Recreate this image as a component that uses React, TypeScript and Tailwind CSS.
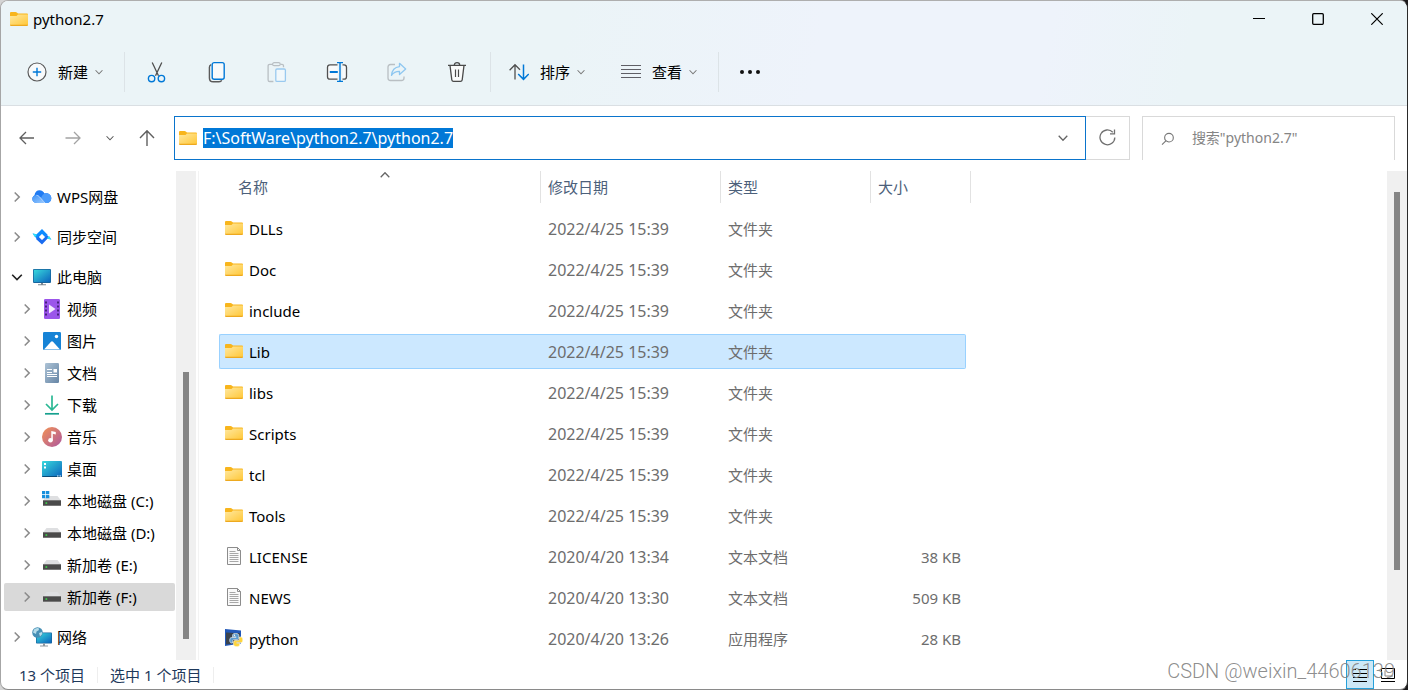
import { useState } from "react";
import type { ReactNode } from "react";

const files = [
  { name: "DLLs", date: "2022/4/25 15:39", type: "文件夹", size: "", icon: "folder" },
  { name: "Doc", date: "2022/4/25 15:39", type: "文件夹", size: "", icon: "folder" },
  { name: "include", date: "2022/4/25 15:39", type: "文件夹", size: "", icon: "folder" },
  { name: "Lib", date: "2022/4/25 15:39", type: "文件夹", size: "", icon: "folder" },
  { name: "libs", date: "2022/4/25 15:39", type: "文件夹", size: "", icon: "folder" },
  { name: "Scripts", date: "2022/4/25 15:39", type: "文件夹", size: "", icon: "folder" },
  { name: "tcl", date: "2022/4/25 15:39", type: "文件夹", size: "", icon: "folder" },
  { name: "Tools", date: "2022/4/25 15:39", type: "文件夹", size: "", icon: "folder" },
  { name: "LICENSE", date: "2020/4/20 13:34", type: "文本文档", size: "38 KB", icon: "text" },
  { name: "NEWS", date: "2020/4/20 13:30", type: "文本文档", size: "509 KB", icon: "text" },
  { name: "python", date: "2020/4/20 13:26", type: "应用程序", size: "28 KB", icon: "python" },
];

export default function App() {
  return (
    <div className="h-screen bg-linear-to-r from-[#d4d4d4] from-50% to-[#1c1a1c] to-90% font-['Noto_Sans','Noto_Sans_CJK_SC',sans-serif] text-[15px] leading-5 text-black">
      <div className="relative flex h-full flex-col overflow-hidden rounded-lg border border-t-[#aeaeae] border-r-[#2a2a2a] border-b-[#8a8a8a] border-l-[#a6a6a6] bg-white">
        <header className="shrink-0 border-b border-[#dadfe3] bg-linear-[100deg,#ebf4f7_40%,#eef3fb_58%,#eef3fb_74%,#ebf4f7_84%]">
          <TitleBar />
          <Toolbar />
        </header>
        <NavBar />
        <div className="flex min-h-0 flex-1">
          <Sidebar />
          <FileList />
        </div>
        <StatusBar />
        <div className="pointer-events-none absolute right-3 bottom-1 font-['Roboto',sans-serif] text-[20px] leading-7 font-light text-[#808080]/90">
          CSDN @weixin_44606139
        </div>
      </div>
    </div>
  );
}

const TitleBar = () => (
  <div className="flex h-9 items-center pr-px">
    <h1 className="flex flex-1 items-center gap-[5px] pl-[9px]">
      <FolderIcon />
      python2.7
    </h1>
    <button aria-label="最小化" className="flex h-full w-[59px] items-center justify-center">
      <svg width="12" height="12" viewBox="0 0 12 12" stroke="#000" fill="none"><path d="M0 5.5h12" /></svg>
    </button>
    <button aria-label="最大化" className="flex h-full w-[59px] items-center justify-center">
      <svg width="12" height="12" viewBox="0 0 12 12" stroke="#000" strokeWidth="1.3" fill="none"><rect x=".7" y=".7" width="10.6" height="10.6" rx="1" /></svg>
    </button>
    <button aria-label="关闭" className="flex h-full w-[59px] items-center justify-center">
      <svg width="12" height="12" viewBox="0 0 12 12" stroke="#000" strokeWidth="1.2" fill="none"><path d="M.3.3l11.4 11.4M11.7.3L.3 11.7" /></svg>
    </button>
  </div>
);

const Toolbar = () => (
  <div className="flex h-17 items-center pt-0.5">
    <ToolMenu label="新建" className="w-[123px] pl-[26px]">
      <svg width="20" height="20" viewBox="0 0 20 20" fill="none">
        <circle cx="10" cy="10" r="9" stroke="#5a5a5a" strokeWidth="1.2" fill="#f8fafb" />
        <path d="M10 5.8v8.4M5.8 10h8.4" stroke="#0078d7" strokeWidth="1.4" />
      </svg>
    </ToolMenu>
    <Divider />
    <div className="flex pr-[3px] pl-0.5">
      <ToolButton label="剪切">
        <path d="M6.2 1.5l6.3 13.2M15.8 1.5L9.5 14.7" stroke="#505050" strokeWidth="1.3" />
        <circle cx="5.6" cy="17.6" r="3.2" stroke="#0078d7" strokeWidth="1.4" />
        <circle cx="15.4" cy="17.6" r="3.2" stroke="#0078d7" strokeWidth="1.4" />
      </ToolButton>
      <ToolButton label="复制">
        <path d="M5.2 3.6C3.9 4 3.4 4.9 3.4 6.2V17c0 2.4 1.5 3.8 3.8 3.8H13c1.4 0 2.300-.5 2.700-1.600" stroke="#5a5a5a" strokeWidth="1.4" />
        <rect x="6.2" y="1.6" width="12" height="16.6" rx="2" stroke="#0078d7" strokeWidth="1.4" fill="#f8fafb" />
      </ToolButton>
      <ToolButton label="粘贴">
        <path d="M7 3.300H3.700c-1 0-1.600.6-1.600 1.600v14c0 1 .6 1.600 1.600 1.600h3.700M14.300 3.300H16c1 0 1.500.6 1.500 1.500v1.500" stroke="#b9bfc3" strokeWidth="1.3" />
        <rect x="6.6" y="1.7" width="7.6" height="3" rx="1.5" stroke="#b9bfc3" strokeWidth="1.2" />
        <rect x="9.8" y="8" width="9.6" height="12.4" rx="1.2" stroke="#99c9ef" strokeWidth="1.3" fill="#f2f8fb" />
      </ToolButton>
      <ToolButton label="重命名">
        <path d="M11.500 3.800H4c-1.600 0-2.500.9-2.500 2.500v9.400c0 1.600.9 2.500 2.500 2.500h7.500M16.500 3.800H18c1.600 0 2.500.9 2.500 2.500v9.400c0 1.600-.9 2.500-2.500 2.500h-1.500" stroke="#505050" strokeWidth="1.3" fill="#f8fafb" />
        <path d="M3.800 11h8" stroke="#0078d7" strokeWidth="2" />
        <path d="M11 1.600h6M11 20.400h6M14 1.600v18.800" stroke="#0078d7" strokeWidth="1.4" />
      </ToolButton>
      <ToolButton label="共享">
        <path d="M9 3.500H4.500C3 3.500 2 4.500 2 6v11c0 1.500 1 2.500 2.500 2.500h11c1.500 0 2.500-1 2.500-2.500v-1.500" stroke="#b9bfc3" strokeWidth="1.3" />
        <path d="M13.500 2.300l6.200 5.600-6.200 5.600v-3.100c-3.600-.1-6 1.100-8 4 .4-5 3.200-8.200 8-8.800z" stroke="#8fc7f0" strokeWidth="1.3" strokeLinejoin="round" />
      </ToolButton>
      <ToolButton label="删除">
        <path d="M4 4.300l1.800 14.500c.2 1 .7 1.600 1.700 1.600h7c1 0 1.500-.6 1.700-1.600L18 4.300" stroke="#4a4a4a" strokeWidth="1.3" fill="#fafbfb" />
        <path d="M2 4.300h18M8.300 4c0-3.200 5.400-3.200 5.400 0" stroke="#4a4a4a" strokeWidth="1.3" />
        <path d="M9.500 8.500v7.500M12.500 8.500v7.500" stroke="#4a4a4a" strokeWidth="1.2" />
      </ToolButton>
    </div>
    <Divider />
    <ToolMenu label="排序" className="w-[112px] pl-[18px]">
      <svg width="20" height="20" viewBox="0 0 20 20" fill="none">
        <path d="M6 17.500V3M.6 8.200L6 2.700l5 5" stroke="#505050" strokeWidth="1.3" />
        <path d="M14.500 2.500v14.800M9.200 12l5.300 5.400L19.800 12" stroke="#0078d7" strokeWidth="1.5" />
      </svg>
    </ToolMenu>
    <ToolMenu label="查看" className="w-[115px] pl-[18px]">
      <svg width="20" height="20" viewBox="0 0 20 20" stroke="#5f5f66" strokeWidth="1.2">
        <path d="M0 3.500h20M0 7.500h20M0 11.500h20M0 15.500h20" />
      </svg>
    </ToolMenu>
    <Divider />
    <button aria-label="更多" className="flex h-10 w-[62px] items-center justify-center">
      <svg width="20" height="4" viewBox="0 0 20 4" fill="#111"><circle cx="2" cy="2" r="2" /><circle cx="10" cy="2" r="2" /><circle cx="18" cy="2" r="2" /></svg>
    </button>
  </div>
);

const Divider = () => <div className="h-10 w-px bg-[#dce3e7]" />;

const ToolMenu = ({ label, className, children }: { label: string; className: string; children: ReactNode }) => (
  <button className={`flex h-10 shrink-0 items-center ${className}`}>
    {children}
    <span className="mr-[7px] ml-[11px]">{label}</span>
    <Chevron className="size-2 text-[#777]" />
  </button>
);

const ToolButton = ({ label, children }: { label: string; children: ReactNode }) => (
  <button aria-label={label} className="flex h-10 w-15 shrink-0 items-center justify-center">
    <svg width="22" height="22" viewBox="0 0 22 22" fill="none">{children}</svg>
  </button>
);

const Chevron = ({ className = "" }: { className?: string }) => (
  <svg viewBox="0 0 10 10" fill="none" stroke="currentColor" strokeWidth="1.3" className={className}>
    <path d="M.7 2.800L5 7.200l4.300-4.400" />
  </svg>
);

const NavBar = () => (
  <div className="flex shrink-0 items-center pt-2.5 pr-3 pb-[11px] pl-[3px]">
    <button aria-label="后退" className="flex h-11 w-[46px] shrink-0 items-center justify-center">
      <svg width="16" height="14" viewBox="0 0 16 14" fill="none" stroke="#5f5f5f" strokeWidth="1.3"><path d="M15 7H1.500M7 1L1 7l6 6" /></svg>
    </button>
    <button aria-label="前进" className="flex h-11 w-[46px] shrink-0 items-center justify-center">
      <svg width="16" height="14" viewBox="0 0 16 14" fill="none" stroke="#a3a3a3" strokeWidth="1.3"><path d="M.5 7h14M9 1l6 6-6 6" /></svg>
    </button>
    <button aria-label="最近位置" className="flex h-11 w-7 shrink-0 items-center justify-center">
      <Chevron className="size-2 text-[#555]" />
    </button>
    <button aria-label="上移" className="mr-1 flex h-11 w-[46px] shrink-0 items-center justify-center">
      <svg width="16" height="18" viewBox="0 0 16 18" fill="none" stroke="#5f5f5f" strokeWidth="1.4"><path d="M8 17V2M1 9l7-7.300L15 9" /></svg>
    </button>
    <div className="flex h-11 min-w-0 flex-1 items-center border border-[#0a74cc] pl-1">
      <FolderIcon />
      <input
        aria-label="地址"
        defaultValue="F:\SoftWare\python2.7\python2.7"
        className="ml-1.5 field-sizing-content h-5 bg-[#0078d7] text-base leading-5 text-white outline-none"
      />
      <button aria-label="以前的位置" className="ml-auto flex h-full w-11 items-center justify-center">
        <Chevron className="size-2.5 text-[#666]" />
      </button>
    </div>
    <button aria-label="刷新" className="mr-3 flex h-11 w-11 shrink-0 items-center justify-center border border-l-0 border-[#d9d9d9]">
      <svg width="18" height="18" viewBox="0 0 18 18" fill="none" stroke="#707070" strokeWidth="1.3">
        <path d="M15.800 8.400A7.400 7.400 0 1 1 13.800 3.300M15.500.4v4.400H11" />
      </svg>
    </button>
    <label className="flex h-11 w-[253px] shrink-0 items-center border border-b-0 border-[#d9d9d9] pb-0.5 pl-[18px]">
      <svg width="16" height="16" viewBox="0 0 16 16" fill="none" stroke="#777" strokeWidth="1.3">
        <circle cx="9.2" cy="7.6" r="5" />
        <path d="M5.600 11.200L1.200 15.600" />
      </svg>
      <input aria-label="搜索" placeholder='搜索"python2.7"' className="ml-[17px] w-full min-w-0 text-sm outline-none placeholder:text-[#858585]" />
    </label>
  </div>
);

const places = [
  { label: "视频", icon: <VideoIcon /> },
  { label: "图片", icon: <PictureIcon /> },
  { label: "文档", icon: <DocIcon /> },
  { label: "下载", icon: <DownloadIcon /> },
  { label: "音乐", icon: <MusicIcon /> },
  { label: "桌面", icon: <DesktopIcon /> },
  { label: "本地磁盘 (C:)", icon: <DriveIcon system /> },
  { label: "本地磁盘 (D:)", icon: <DriveIcon /> },
  { label: "新加卷 (E:)", icon: <DriveIcon /> },
  { label: "新加卷 (F:)", icon: <DriveIcon /> },
];

const Sidebar = () => (
  <div className="flex w-[195px] shrink-0">
    <nav className="flex min-w-0 flex-1 flex-col gap-3 overflow-hidden pt-3 pr-px pl-[3px]">
      <TreeItem label="WPS网盘" icon={<CloudIcon />} />
      <TreeItem label="同步空间" icon={<SyncIcon />} />
      <div className="flex flex-col gap-1">
        <TreeItem label="此电脑" icon={<MonitorIcon />} open />
        {places.map((p) => (
          <TreeItem key={p.label} label={p.label} icon={p.icon} nested active={p.label === "新加卷 (F:)"} />
        ))}
      </div>
      <TreeItem label="网络" icon={<NetworkIcon />} />
    </nav>
    <div className="flex w-5 flex-col items-center bg-[#f0f0f0]">
      <div className="mt-[201px] h-[267px] w-1.5 bg-[#858585]" />
    </div>
  </div>
);

type TreeItemProps = { label: string; icon: ReactNode; nested?: boolean; open?: boolean; active?: boolean };

const TreeItem = ({ label, icon, nested, open, active }: TreeItemProps) => (
  <button
    className={`flex h-7 w-full shrink-0 items-center rounded-xs whitespace-nowrap ${nested ? "pl-[17px]" : "pl-[7px]"} ${active ? "bg-[#d9d9d9]" : ""}`}
  >
    <svg width="12" height="12" viewBox="0 0 12 12" fill="none" strokeWidth="1.6" className={open ? "stroke-[#222]" : "stroke-[#8b8b8b]"}>
      <path d={open ? "M1.200 3.800L6 8.600l4.800-4.800" : "M3.700 1.500L8.200 6l-4.500 4.500"} />
    </svg>
    <span className="mr-[5px] ml-[9px] size-5 shrink-0">{icon}</span>
    {label}
  </button>
);

const FileList = () => {
  const [selected, setSelected] = useState("Lib");

  return (
    <main className="flex min-w-0 flex-1">
      <div className="ml-0.5 min-w-0 flex-1 overflow-hidden border-l border-[#f3f3f3] pl-5">
        <table className="w-[747px] table-fixed border-separate border-spacing-0">
          <thead>
            <tr className="text-left text-[#4c607a]">
              <th className="relative h-[37px] w-[322px] p-0 align-top font-normal">
                <div className="h-8 border-r border-[#e2e2e2] pt-1.5 pl-[19px]">名称</div>
                <Chevron className="absolute -top-px left-[161px] size-2.5 rotate-180 text-[#666]" />
              </th>
              <th className="w-[180px] p-0 align-top font-normal">
                <div className="h-8 border-r border-[#e2e2e2] pt-1.5 pl-[7px]">修改日期</div>
              </th>
              <th className="w-[150px] p-0 align-top font-normal">
                <div className="h-8 border-r border-[#e2e2e2] pt-1.5 pl-[7px]">类型</div>
              </th>
              <th className="p-0 align-top font-normal">
                <div className="-mr-[5px] h-8 border-r border-[#e2e2e2] pt-1.5 pl-[7px]">大小</div>
              </th>
            </tr>
          </thead>
          <tbody>
            {files.map((f) => {
              const cell = `flex h-[35px] items-center border-y ${f.name === selected ? "border-[#99d1ff] bg-[#cce8ff]" : "border-transparent"}`;
              return (
                <tr key={f.name} onClick={() => setSelected(f.name)} className="text-[#6d6d6d]">
                  <td className="p-0 py-[3px]">
                    <div className={`${cell} rounded-l-xs border-l pl-[5px] text-black`}>
                      <span className="mr-1.5 flex w-[18px] justify-center pb-0.5">
                        {f.icon === "folder" && <FolderIcon />}
                        {f.icon === "text" && <TextFileIcon />}
                        {f.icon === "python" && <PythonIcon />}
                      </span>
                      {f.name}
                    </div>
                  </td>
                  <td className="p-0"><div className={`${cell} pl-[7px] text-base leading-5`}>{f.date}</div></td>
                  <td className="p-0"><div className={`${cell} pl-[7px]`}>{f.type}</div></td>
                  <td className="p-0"><div className={`${cell} justify-end rounded-r-xs border-r pr-1`}>{f.size}</div></td>
                </tr>
              );
            })}
          </tbody>
        </table>
      </div>
      <div className="flex w-5 shrink-0 flex-col items-center bg-[#f0f0f0]">
        <div className="mt-[21px] h-[378px] w-1.5 bg-[#858585]" />
      </div>
    </main>
  );
};

const StatusBar = () => (
  <footer className="flex h-[29px] shrink-0 items-center pr-[5px] pl-[18px] text-[#1e395b]">
    <span>13 个项目</span>
    <div className="mx-3 h-4 w-px bg-[#eee]" />
    <span>选中 1 个项目</span>
    <div className="mx-3 h-4 w-px bg-[#eee]" />
    <button aria-label="详细信息" className="ml-auto flex h-[29px] w-7 items-center justify-center border border-[#26a0da] bg-[#cde8f6]">
      <svg width="16" height="16" viewBox="0 0 16 16" stroke="#000"><path d="M1 2.500h3M6 2.500h9M1 6.500h14M1 10.500h14M1 14.500h14" /></svg>
    </button>
    <button aria-label="大图标" className="flex h-[29px] w-7 items-center justify-center">
      <svg width="14" height="16" viewBox="0 0 14 16" fill="none" stroke="#000"><path d="M.5 1.500h13v10H.5zM0 14.500h14" /><path d="M4 3.500v5.500h8" stroke="#888" /></svg>
    </button>
  </footer>
);

function FolderIcon() {
  return (
    <svg width="18" height="14" viewBox="0 0 18 14" className="shrink-0">
      <defs>
        <linearGradient id="folder" x1="0" y1="0" x2="1" y2="1">
          <stop offset="0" stopColor="#ffe8a0" />
          <stop offset="1" stopColor="#ffc83a" />
        </linearGradient>
      </defs>
      <path d="M0 1q0-1 1-1h4.500q.8 0 1.300.6L8 1.500h9q1 0 1 1V6H0z" fill="#f8b51c" />
      <path d="M0 4h6.500l1.500-1.500h10V13H0z" fill="url(#folder)" />
      <path d="M0 12.800h18V13q0 1-1 1H1q-1 0-1-1z" fill="#eda91f" />
    </svg>
  );
}

function TextFileIcon() {
  return (
    <svg width="16" height="18" viewBox="0 0 16 18" fill="none">
      <path d="M1.500.5h10l3 3v14h-13z" fill="#fafafa" stroke="#8c8c8c" />
      <path d="M11.500.5v3h3" stroke="#8c8c8c" />
      <path d="M3.500 4.500h6M3.500 6.500h9M3.500 8.500h9M3.500 10.500h9M3.500 12.500h9M3.500 14.500h9" stroke="#a8a8a8" />
    </svg>
  );
}

function PythonIcon() {
  return (
    <svg width="18" height="18" viewBox="0 0 18 18">
      <path d="M0 0l16 1.500v13L0 17z" fill="#2158b8" />
      <path d="M1 3.500l14 .7v9.500L1 15.500z" fill="#3b434d" />
      <path d="M10.500 4.500C8 4.500 7.500 5.500 7.500 6.500v1.300h3.500v.7H6.700c-1.500 0-2 1.200-2 2.800s.6 2.700 1.800 2.700h1v-1.700c0-1 .7-1.700 1.700-1.700h3.300c.8 0 1.300-.5 1.300-1.300V6.500c0-1.300-1-2-3.300-2z" fill="#5b9bd0" stroke="#e8f0f6" strokeWidth=".7" />
      <path d="M14.500 8v1.800c0 1-.8 1.800-1.700 1.800H10c-.8 0-1.400.6-1.400 1.400V15.500c0 1.300 1.200 2 3 2s3.100-.6 3.100-2v-1.300h-3v-.6h4.200c1.300 0 1.900-1 1.900-2.600s-.6-3-1.800-3z" fill="#ffd43b" stroke="#fff6cf" strokeWidth=".7" />
      <circle cx="9.4" cy="6.3" r=".7" fill="#fff" />
    </svg>
  );
}

function CloudIcon() {
  return (
    <svg width="20" height="20" viewBox="0 0 20 20">
      <defs>
        <linearGradient id="cloud" x1="0" y1="0" x2="1" y2="1">
          <stop offset="0" stopColor="#3f93f7" />
          <stop offset="1" stopColor="#9ccbff" />
        </linearGradient>
      </defs>
      <path d="M5 16C1.800 16 .3 14 .3 12S1.800 8.500 2.500 8.300C2.800 5 5 3.200 7.500 3.200c2.300 0 4.300 1.300 5 3.200 3.300-.9 6.800 1.200 6.800 4.800 0 3-2 4.800-5 4.800z" fill="#1f7bf3" />
      <path d="M5 16C1.800 16 .3 14 .3 12s1.600-3.800 3.900-3.700C7.500 8.300 9 12 13 16z" fill="url(#cloud)" />
      <path d="M9 11c1-3 2.500-4.200 4-4.600 3.500-.5 6.300 1.700 6.300 4.800 0 3-2 4.800-5 4.800H13c-1.600-1.600-2.900-3.200-4-5z" fill="#4b9bfb" />
      <path d="M4.500 8.300C7.500 8.500 9 12 13 16" stroke="#d5e8ff" strokeWidth=".8" fill="none" />
    </svg>
  );
}

function SyncIcon() {
  return (
    <svg width="20" height="20" viewBox="0 0 20 20" fill="none">
      <path d="M.6 6.500l4 .7L10 2l5.600 5.700-2.700 2.700L10 7.300l-5 5z" fill="#0d8bff" />
      <path d="M19.400 12.500l-4-.7L10 17.500l-6-5.500 2.700-2.500L10 12.500l5-4.500z" fill="#1a6cf0" />
      <path d="M.6 6.500l4.500.9L3 10.300z" fill="#2fe0f8" />
      <path d="M19.400 12.500l-4.500-.9L17 8.700z" fill="#2fe0f8" />
      <path d="M10 7l3 3-3 3-3-3z" fill="#fff" />
    </svg>
  );
}

function MonitorIcon() {
  return (
    <svg width="20" height="20" viewBox="0 0 20 20">
      <defs>
        <linearGradient id="screen" x1="0" y1="0" x2="1" y2="1">
          <stop offset="0" stopColor="#38d9dc" />
          <stop offset="1" stopColor="#0c64bd" />
        </linearGradient>
      </defs>
      <rect x="1" y="2" width="18" height="14" rx="1" fill="#17659e" />
      <rect x="1.8" y="2.8" width="16.4" height="12.2" fill="url(#screen)" />
      <path d="M9 16h2v1.300h3v1H6v-1h3z" fill="#7d8790" />
    </svg>
  );
}

function NetworkIcon() {
  return (
    <svg width="20" height="20" viewBox="0 0 20 20">
      <rect x="4" y="5.5" width="16" height="11" rx=".8" fill="#17659e" />
      <rect x="4.7" y="6.2" width="14.6" height="9.6" fill="url(#screen)" />
      <path d="M11 16.500h2v2h3v1H8v-1h3z" fill="#8f989f" />
      <circle cx="5.5" cy="5.5" r="5.3" fill="#468fb5" />
      <path d="M2 2.500q2-2 4.500-1.500L7 3 4.500 4.500 4 7 1 5.500zM7 6l3-1 .3 2L8 9.500z" fill="#b5dcea" />
    </svg>
  );
}

function VideoIcon() {
  return (
    <svg width="20" height="20" viewBox="0 0 20 20">
      <rect x="2" width="16" height="20" rx="1.2" fill="#9b55ea" />
      <path d="M3 2.500h2v2H3zM3 6.500h2v2H3zM3 10.500h2v2H3zM3 14.500h2v2H3zM15 2.500h2v2h-2zM15 6.500h2v2h-2zM15 10.500h2v2h-2zM15 14.500h2v2h-2z" fill="#46227c" />
      <path d="M7 5.500l6.500 4.500L7 14.500z" fill="#f3eafd" />
    </svg>
  );
}

function PictureIcon() {
  return (
    <svg width="20" height="20" viewBox="0 0 20 20">
      <rect x="1" y="1" width="18" height="18" rx="1.3" fill="#1683d6" />
      <path d="M2 18.500l7-7.800q1-1 2 0l7 7.800z" fill="#fff" />
      <circle cx="14.5" cy="5.5" r="1.7" fill="#fff" />
    </svg>
  );
}

function DocIcon() {
  return (
    <svg width="20" height="20" viewBox="0 0 20 20">
      <defs>
        <linearGradient id="doc" x1="0" y1="0" x2="1" y2="1">
          <stop offset="0" stopColor="#adc3d6" />
          <stop offset="1" stopColor="#6685a5" />
        </linearGradient>
      </defs>
      <rect x="3" width="14" height="20" rx="1.2" fill="url(#doc)" />
      <path d="M5 6.500h5M5 9.500h5M5 11.500h10M5 13.500h10" stroke="#fff" />
      <path d="M11.500 6h3.500v3.500h-3.500z" fill="#fff" />
    </svg>
  );
}

function DownloadIcon() {
  return (
    <svg width="20" height="20" viewBox="0 0 20 20" fill="none" strokeWidth="1.7">
      <path d="M10 .5v14M4 9l6 6 6-6" stroke="#2bb894" />
      <path d="M3 18.800h14" stroke="#16a08e" />
    </svg>
  );
}

function MusicIcon() {
  return (
    <svg width="20" height="20" viewBox="0 0 20 20">
      <defs>
        <linearGradient id="music" x1="0" y1="0" x2="1" y2="1">
          <stop offset="0" stopColor="#f39355" />
          <stop offset="1" stopColor="#ad579f" />
        </linearGradient>
      </defs>
      <circle cx="10" cy="10" r="10" fill="url(#music)" />
      <circle cx="8.5" cy="13.2" r="2.3" fill="#fff" />
      <path d="M9.300 4l4.500 1v2.500l-3-.7v6.500H9.300z" fill="#fff" />
    </svg>
  );
}

function DesktopIcon() {
  return (
    <svg width="20" height="20" viewBox="0 0 20 20">
      <rect y="2" width="20" height="16" rx="1" fill="url(#screen)" />
      <path d="M2 4h2v2H2zM2 7.500h2v2H2z" fill="#fff" />
      <path d="M0 17h20q0 1-1 1H1q-1 0-1-1z" fill="#0b4b78" />
      <path d="M15 17h1.500M17.500 17h1.500" stroke="#fff" />
    </svg>
  );
}

function DriveIcon({ system = false }: { system?: boolean }) {
  return (
    <svg width="20" height="20" viewBox="0 0 20 20">
      <path d="M4.500 5h11L19 9.500H1z" fill="#dedfe1" />
      <rect x="1" y="9" width="18" height="6" fill="#4a4a4a" />
      <path d="M1 9h18v1H1zM1 14h18v1H1z" fill="#777" />
      <rect x="3.5" y="11.3" width="1.7" height="1.5" fill="#3be04a" />
      {system && <path d="M0 0h3.300v3.300H0zM4 0h3.300v3.300H4zM0 4h3.300v3.300H0zM4 4h3.300v3.300H4z" fill="#1790dd" />}
    </svg>
  );
}
